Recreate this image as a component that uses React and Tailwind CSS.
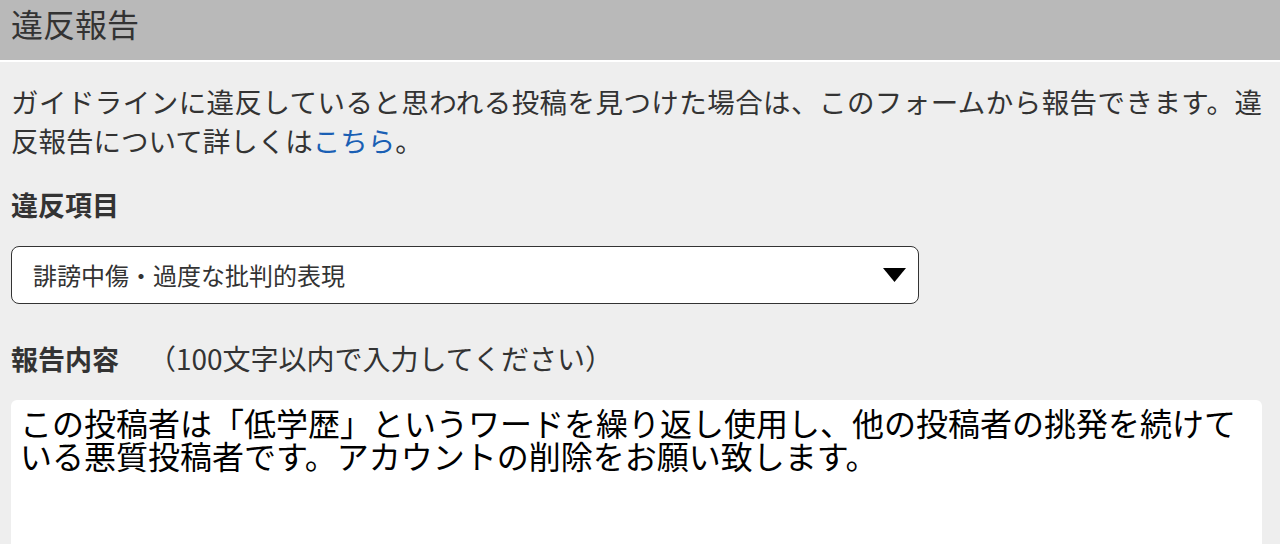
export default function App() {
  return (
    <div className="w-[1280px] h-[544px] overflow-hidden bg-[#eeeeee] font-['Noto_Sans_CJK_JP',sans-serif] text-[#333333]">
      <div className="h-[62px] bg-[#b9b9b9] border-b-2 border-white pl-[11px] pt-[5px]">
        <h1 className="text-[32px] font-normal leading-[36px] text-[#333333]">違反報告</h1>
      </div>
      <div className="pl-[11px] pr-[18px]">
        <p className="mt-[20px] text-[27.5px] leading-[39px]">
          <span className="block whitespace-nowrap text-justify [text-align-last:justify]">
            ガイドラインに違反していると思われる投稿を見つけた場合は、このフォームから報告できます。違
          </span>
          <span className="block">
            反報告について詳しくは<a href="#" className="text-[#1a5fb4]">こちら</a>。
          </span>
        </p>
        <div className="mt-[25px] text-[27px] leading-[39px] font-bold">違反項目</div>
        <div className="mt-[22px] w-[908px] h-[58px] bg-white border-[1.5px] border-[#333333] rounded-[8px] flex items-center justify-between pl-[21px] pr-[12px]">
          <span className="text-[24px] leading-none text-[#333333]">誹謗中傷・過度な批判的表現</span>
          <svg width="23" height="14" viewBox="0 0 23 14" className="block">
            <polygon points="0,0 23,0 11.5,14" fill="#000000" />
          </svg>
        </div>
        <div className="mt-[35px] flex items-center text-[27px] leading-[39px]">
          <span className="font-bold">報告内容</span>
          <span className="ml-[29px] font-normal text-[28px]">（100文字以内で入力してください）</span>
        </div>
        <div className="mt-[22px] w-[1251px] h-[220px] bg-white rounded-[6px] px-[9px] pt-[6px]">
          <div className="text-[32px] leading-[33px] text-black">
            この投稿者は「低学歴」というワードを繰り返し使用し、他の投稿者の挑発を続けている悪質投稿者です。アカウントの削除をお願い致します。
          </div>
        </div>
      </div>
    </div>
  );
}
